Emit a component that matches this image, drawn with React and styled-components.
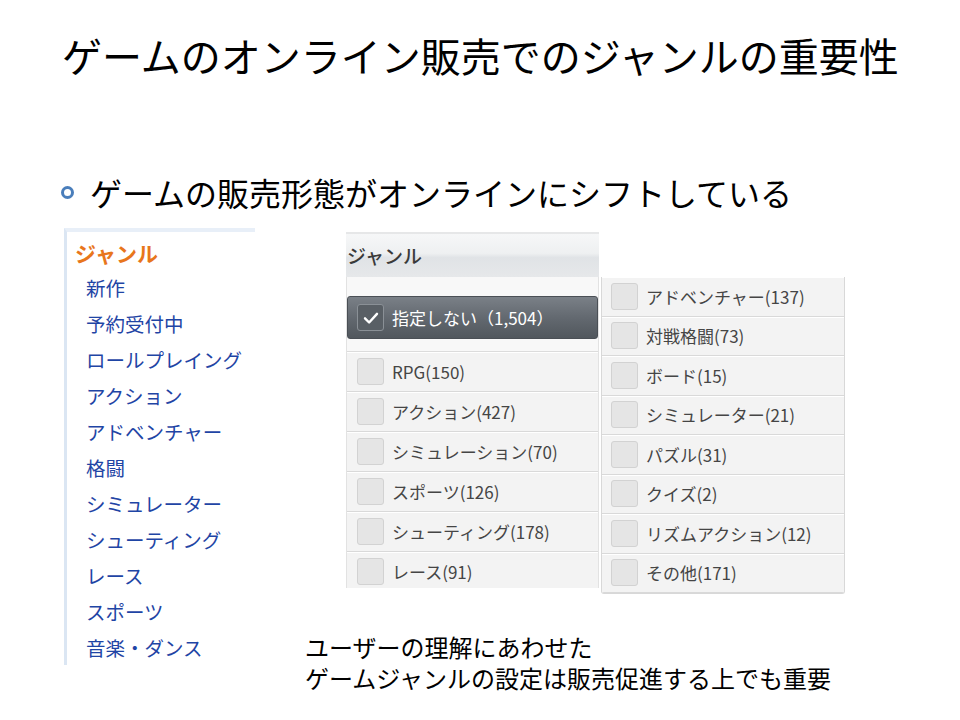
import React from "react";
import styled, { createGlobalStyle } from "styled-components";

const GlobalStyle = createGlobalStyle`
  body {
    margin: 0;
    background: #ffffff;
    font-family: "Noto Sans CJK JP", "Noto Sans", sans-serif;
  }
`;

const Slide = styled.div`
  width: 960px;
  height: 720px;
  overflow: hidden;
  background: #ffffff;
  color: #000000;
`;

const Title = styled.h1`
  margin: 0;
  padding: 31px 0 0 62px;
  font-size: 40px;
  line-height: 48px;
  font-weight: 400;
  white-space: nowrap;
`;

const Bullet = styled.div`
  margin-top: 93px;
  height: 40px;
  display: flex;
  align-items: center;
  padding-left: 61px;
  font-size: 32px;
  white-space: nowrap;
`;

const Dot = styled.span`
  width: 13px;
  height: 13px;
  box-sizing: border-box;
  border: 3px solid #4a7ebb;
  border-radius: 50%;
  margin-right: 16px;
  flex: none;
`;

const Body = styled.div`
  margin-top: 16px;
  display: flex;
  align-items: flex-start;
  padding-left: 64px;
`;

const SideMenu = styled.div`
  width: 191px;
  height: 437px;
  box-sizing: border-box;
  border-left: 3px solid #dbe6f3;
  border-top: 4px solid #e8eff8;
`;

const SideHeading = styled.div`
  padding: 4px 0 0 8px;
  line-height: 34px;
  font-size: 21px;
  font-weight: 700;
  color: #e8761c;
`;

const SideItem = styled.div`
  padding-left: 19px;
  line-height: 36px;
  font-size: 19.5px;
  color: #1f45a5;
  white-space: nowrap;
`;

const RightArea = styled.div`
  margin-left: 50px;
  width: 560px;
`;

const GenrePanel = styled.div`
  margin: 4px 0 0 41px;
  width: 499px;
`;

const PanelHeader = styled.div`
  width: 253px;
  height: 45px;
  box-sizing: border-box;
  border-top: 2px solid #e6e7e8;
  padding: 1px 0 0 1px;
  line-height: 42px;
  font-size: 19px;
  font-weight: 500;
  color: #3a3a3a;
  background: linear-gradient(#f6f7f8 0%, #eef0f1 45%, #e0e3e6 55%, #e6e8ea 100%);
`;

const Columns = styled.div`
  display: flex;
  align-items: flex-start;
`;

const LeftCol = styled.div`
  width: 253px;
  height: 311px;
  box-sizing: border-box;
  overflow: hidden;
  padding-top: 19px;
  background: #f8f8f8;
  border-left: 1px solid #e2e2e2;
  border-right: 1px solid #e2e2e2;
`;

const SelectedButton = styled.div`
  height: 43px;
  box-sizing: border-box;
  display: flex;
  align-items: center;
  gap: 8px;
  padding-left: 9px;
  border: 1px solid #4a4f55;
  border-radius: 3px;
  background: linear-gradient(#7a8087, #636970 50%, #51575d);
  color: #ffffff;
  font-size: 17px;
  white-space: nowrap;
`;

const OptionList = styled.div`
  margin-top: 12px;
  border-top: 1px solid #dcdcdc;
`;

const RightCol = styled.div`
  margin-left: 2px;
  width: 244px;
  box-sizing: border-box;
  border: 1px solid #d8d8d8;
  border-top: none;
  border-radius: 0 0 3px 3px;
  overflow: hidden;
`;

const OptionRow = styled.div`
  height: ${(p) => p.$h}px;
  box-sizing: border-box;
  display: flex;
  align-items: center;
  gap: 8px;
  padding-left: ${(p) => p.$pad}px;
  background: #f3f3f3;
  border-bottom: 1px solid #d9d9d9;
  box-shadow: inset 0 1px 0 #ffffff;
  font-size: 17px;
  color: #454545;
  white-space: nowrap;
`;

const Box = styled.span`
  width: 27px;
  height: 27px;
  box-sizing: border-box;
  flex: none;
  display: flex;
  align-items: center;
  justify-content: center;
  border-radius: 3px;
  border: 1px solid ${(p) => (p.$checked ? "#8a9096" : "#d2d2d2")};
  background: ${(p) => (p.$checked ? "#595f65" : "#e5e5e5")};
`;

const Caption = styled.div`
  margin-top: 37px;
  font-size: 24px;
`;

const CaptionLine = styled.div`
  height: 31px;
  line-height: 31px;
  white-space: nowrap;
`;

const sideItems = [
  "新作",
  "予約受付中",
  "ロールプレイング",
  "アクション",
  "アドベンチャー",
  "格闘",
  "シミュレーター",
  "シューティング",
  "レース",
  "スポーツ",
  "音楽・ダンス",
];

const leftOptions = [
  "RPG(150)",
  "アクション(427)",
  "シミュレーション(70)",
  "スポーツ(126)",
  "シューティング(178)",
  "レース(91)",
];

const rightOptions = [
  "アドベンチャー(137)",
  "対戦格闘(73)",
  "ボード(15)",
  "シミュレーター(21)",
  "パズル(31)",
  "クイズ(2)",
  "リズムアクション(12)",
  "その他(171)",
];

function Check() {
  return (
    <svg width="18" height="18" viewBox="0 0 24 24">
      <polyline
        points="4,12.5 9.5,18 20,6.5"
        fill="none"
        stroke="#ffffff"
        strokeWidth="3.2"
        strokeLinecap="round"
        strokeLinejoin="round"
      />
    </svg>
  );
}

export default function App() {
  return (
    <Slide>
      <GlobalStyle />
      <Title>ゲームのオンライン販売でのジャンルの重要性</Title>
      <Bullet>
        <Dot />
        ゲームの販売形態がオンラインにシフトしている
      </Bullet>
      <Body>
        <SideMenu>
          <SideHeading>ジャンル</SideHeading>
          {sideItems.map((item) => (
            <SideItem key={item}>{item}</SideItem>
          ))}
        </SideMenu>
        <RightArea>
          <GenrePanel>
            <PanelHeader>ジャンル</PanelHeader>
            <Columns>
              <LeftCol>
                <SelectedButton>
                  <Box $checked>
                    <Check />
                  </Box>
                  指定しない（1,504）
                </SelectedButton>
                <OptionList>
                  {leftOptions.map((o) => (
                    <OptionRow key={o} $h={40} $pad={10}>
                      <Box />
                      {o}
                    </OptionRow>
                  ))}
                </OptionList>
              </LeftCol>
              <RightCol>
                {rightOptions.map((o) => (
                  <OptionRow key={o} $h={39.5} $pad={9}>
                    <Box />
                    {o}
                  </OptionRow>
                ))}
              </RightCol>
            </Columns>
          </GenrePanel>
          <Caption>
            <CaptionLine>ユーザーの理解にあわせた</CaptionLine>
            <CaptionLine>ゲームジャンルの設定は販売促進する上でも重要</CaptionLine>
          </Caption>
        </RightArea>
      </Body>
    </Slide>
  );
}
